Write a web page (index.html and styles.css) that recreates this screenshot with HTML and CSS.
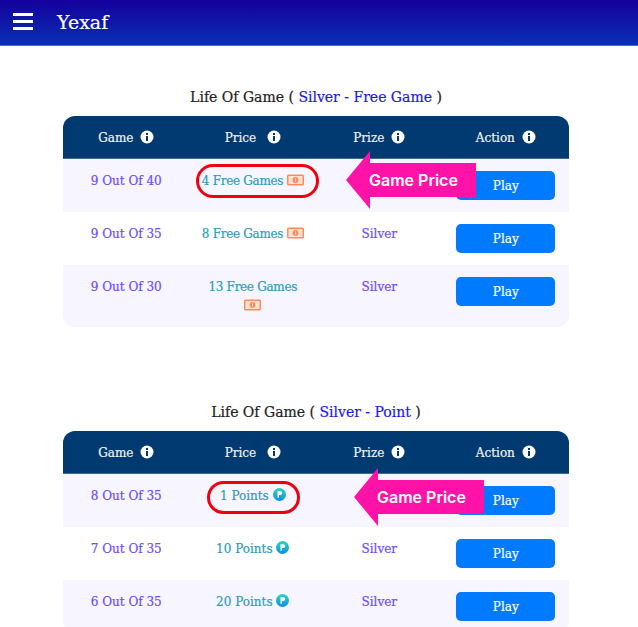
FILE: index.html
```html
<!DOCTYPE html>
<html lang="en">
<head>
    <meta charset="UTF-8">
    <meta name="viewport" content="width=device-width, initial-scale=1.0">
    <title>Yexaf</title>
    <link rel="stylesheet" href="styles.css">
</head>
<body>
    <svg class="icon-defs" width="0" height="0">
        <defs>
            <linearGradient id="coin" x1="0" y1="0" x2="0" y2="1">
                <stop offset="0" stop-color="#2fd6b4"/>
                <stop offset="1" stop-color="#0a8fe8"/>
            </linearGradient>
            <symbol id="info" viewBox="0 0 14 14">
                <circle cx="7" cy="7" r="6.5" fill="#fff"/>
                <rect x="6" y="3" width="2" height="2" fill="#003a70"/>
                <rect x="6" y="6" width="2" height="5" fill="#003a70"/>
            </symbol>
            <symbol id="ticket" viewBox="0 0 17 12">
                <rect x="0" y="0.5" width="17" height="11" rx="1.5" fill="#ff8a5c"/>
                <rect x="1.5" y="2" width="14" height="8" fill="#ffe3d4"/>
                <circle cx="8.5" cy="6" r="3" fill="#ff8a5c"/>
                <rect x="8" y="4.5" width="1" height="3" fill="#ffe3d4"/>
            </symbol>
            <symbol id="point" viewBox="0 0 13 13">
                <circle cx="6.5" cy="6.5" r="6.5" fill="url(#coin)"/>
                <path d="M4.5 3.2h2.8a1.9 1.9 0 0 1 0 3.8H6V9.8H4.5z" fill="#fff"/>
            </symbol>
        </defs>
    </svg>

    <div class="page">
        <header class="topbar">
            <button class="menu-btn" aria-label="Menu">
                <span></span><span></span><span></span>
            </button>
            <span class="brand">Yexaf</span>
        </header>

        <section class="game-section first">
            <h3 class="section-title">Life Of Game ( <span class="accent">Silver - Free Game</span> )</h3>
            <table class="game-table">
                <thead>
                    <tr>
                        <th>Game <svg class="info"><use href="#info"/></svg></th>
                        <th>Price &nbsp;<svg class="info"><use href="#info"/></svg></th>
                        <th>Prize <svg class="info"><use href="#info"/></svg></th>
                        <th>Action <svg class="info"><use href="#info"/></svg></th>
                    </tr>
                </thead>
                <tbody>
                    <tr>
                        <td class="purple">9 Out Of 40</td>
                        <td class="price free">4 Free Games <svg class="ticket"><use href="#ticket"/></svg></td>
                        <td class="purple"></td>
                        <td class="action"><button class="play">Play</button></td>
                    </tr>
                    <tr>
                        <td class="purple">9 Out Of 35</td>
                        <td class="price free">8 Free Games <svg class="ticket"><use href="#ticket"/></svg></td>
                        <td class="purple">Silver</td>
                        <td class="action"><button class="play">Play</button></td>
                    </tr>
                    <tr>
                        <td class="purple">9 Out Of 30</td>
                        <td class="price free">13 Free Games<br><svg class="ticket"><use href="#ticket"/></svg></td>
                        <td class="purple">Silver</td>
                        <td class="action"><button class="play">Play</button></td>
                    </tr>
                </tbody>
            </table>
            <div class="ring ring-free"></div>
            <div class="arrow arrow-free">Game Price</div>
        </section>

        <section class="game-section second">
            <h3 class="section-title">Life Of Game ( <span class="accent">Silver - Point</span> )</h3>
            <table class="game-table">
                <thead>
                    <tr>
                        <th>Game <svg class="info"><use href="#info"/></svg></th>
                        <th>Price &nbsp;<svg class="info"><use href="#info"/></svg></th>
                        <th>Prize <svg class="info"><use href="#info"/></svg></th>
                        <th>Action <svg class="info"><use href="#info"/></svg></th>
                    </tr>
                </thead>
                <tbody>
                    <tr>
                        <td class="purple">8 Out Of 35</td>
                        <td class="price">1 Points <svg class="point"><use href="#point"/></svg></td>
                        <td class="purple"></td>
                        <td class="action"><button class="play">Play</button></td>
                    </tr>
                    <tr>
                        <td class="purple">7 Out Of 35</td>
                        <td class="price">10 Points <svg class="point"><use href="#point"/></svg></td>
                        <td class="purple">Silver</td>
                        <td class="action"><button class="play">Play</button></td>
                    </tr>
                    <tr>
                        <td class="purple">6 Out Of 35</td>
                        <td class="price">20 Points <svg class="point"><use href="#point"/></svg></td>
                        <td class="purple">Silver</td>
                        <td class="action"><button class="play">Play</button></td>
                    </tr>
                </tbody>
            </table>
            <div class="ring ring-point"></div>
            <div class="arrow arrow-point">Game Price</div>
        </section>
    </div>
</body>
</html>
```

FILE: styles.css
```css
html, body {
    margin: 0;
    background: #fff;
}

body {
    font-family: "DejaVu Serif", "Liberation Serif", serif;
    -webkit-text-stroke: 0.2px;
}

.icon-defs {
    position: absolute;
}

.page {
    height: 100vh;
    overflow: hidden;
}

.topbar {
    display: flex;
    align-items: center;
    gap: 24px;
    height: 43px;
    padding: 0 0 2px 13px;
    background: linear-gradient(180deg, #14009e 0%, #0a30b4 100%);
    border-bottom: 1px solid #4a6fd0;
}

.menu-btn {
    display: flex;
    flex-direction: column;
    gap: 4px;
    width: 20px;
    padding: 0;
    border: none;
    background: none;
}

.menu-btn span {
    height: 3px;
    background: #fff;
}

.brand {
    color: #fff;
    font-size: 19px;
}

.game-section {
    position: relative;
    padding: 0 69px 0 63px;
}

.first {
    margin-top: 41px;
}

.second {
    margin-top: 75px;
}

.section-title {
    margin: 0 0 9px;
    height: 20px;
    line-height: 20px;
    text-align: center;
    color: #222;
    font-size: 14px;
    font-weight: 500;
}

.accent {
    color: #1a1aee;
}

.game-table {
    width: 100%;
    table-layout: fixed;
    border-collapse: separate;
    border-spacing: 0;
    font-size: 12px;
}

.game-table th {
    height: 42px;
    padding: 0;
    background: #003a70;
    border-bottom: 1px solid #3a6a98;
    color: #f2f2f2;
    font-weight: 400;
}

.game-table th:first-child {
    border-top-left-radius: 12px;
}

.game-table th:last-child {
    border-top-right-radius: 12px;
}

.game-table td {
    padding: 13px 0 11px;
    vertical-align: top;
    text-align: center;
    line-height: 19px;
}

.game-table td.action {
    padding: 12px 0;
}

.game-table tbody tr:nth-child(odd) td {
    background: #f7f5ff;
}

.game-table tbody tr:last-child td:first-child {
    border-bottom-left-radius: 12px;
}

.game-table tbody tr:last-child td:last-child {
    border-bottom-right-radius: 12px;
}

.purple {
    color: #6a4dff;
}

.price {
    color: #2a9dbb;
}

.free {
    letter-spacing: -0.3px;
}

.info {
    width: 14px;
    height: 14px;
    margin-left: 3px;
    vertical-align: -2px;
}

.ticket {
    width: 17px;
    height: 12px;
    vertical-align: -1px;
}

.point {
    width: 13px;
    height: 13px;
    vertical-align: -1px;
}

.play {
    display: block;
    width: 99px;
    height: 29px;
    margin: 0 auto;
    padding: 0;
    border: none;
    border-radius: 5px;
    background: #007bff;
    color: #fff;
    font-family: inherit;
    font-size: 12px;
}

.ring {
    position: absolute;
    box-sizing: border-box;
    border: 3px solid #f0000f;
    border-radius: 17px;
}

.ring-free {
    left: 196px;
    top: 77px;
    width: 123px;
    height: 34px;
}

.ring-point {
    left: 207px;
    top: 79px;
    width: 93px;
    height: 33px;
}

.arrow {
    position: absolute;
    box-sizing: border-box;
    width: 130px;
    height: 58px;
    padding-left: 23px;
    line-height: 58px;
    background: #ff12a8;
    clip-path: polygon(0 50%, 24px 0, 24px 12px, 100% 12px, 100% 46px, 24px 46px, 24px 100%);
    color: #fff;
    font-family: "Inter", "Liberation Sans", sans-serif;
    font-size: 16px;
    font-weight: 600;
    -webkit-text-stroke: 0;
}

.arrow-free {
    left: 346px;
    top: 64px;
}

.arrow-point {
    left: 354px;
    top: 66px;
}
```
